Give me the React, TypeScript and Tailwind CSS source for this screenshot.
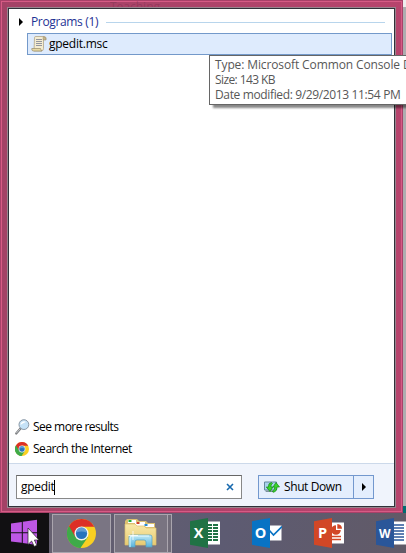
import React from "react";

function ChromeLogo({ size }: { size: number }) {
  return (
    <svg width={size} height={size} viewBox="0 0 28 28" className="block shrink-0">
      <circle cx="14" cy="14" r="14" fill="#f9cf22" />
      <path d="M14 14 L1.9 7 A14 14 0 0 0 13 28 L20.1 17.5 Z" fill="#3faa49" />
      <path d="M1.9 7 L8 17.5 L14 14 L14 7.6 L26.4 7.6 A14 14 0 0 0 1.9 7Z" fill="#dc2f27" />
      <path d="M1.9 7 L8 17.5 L14 21 L12.8 28 A14 14 0 0 1 1.9 7Z" fill="#3faa49" />
      <circle cx="14" cy="14" r="6.8" fill="#f3f4f0" />
      <circle cx="14" cy="14" r="5.4" fill="#2873bd" />
      <path d="M9 13 A5 5 0 0 1 19 13 Q14 11 9 13Z" fill="#609bd3" />
    </svg>
  );
}

function ScrollIcon() {
  return (
    <svg width="16" height="16" viewBox="0 0 16 16" className="block shrink-0">
      <path d="M3.5 1.5 Q3.5 .5 5 .5 H13.5 Q15.5 .8 15 3.5 H12.5 V12.5 Q12.5 15 10 15 H3Z" fill="#f4ecd1" stroke="#a99b7b" strokeWidth=".7" />
      <path d="M12.5 .7 Q11.8 1.3 12.3 4 H15 Q15.6 1 12.5 .7Z" fill="#c9b98c" stroke="#9a8c6b" strokeWidth=".6" />
      <path d="M.8 12.5 H9.5 Q10 14.7 11 15 H2 Q.5 14.6 .8 12.5Z" fill="#e8d9a4" stroke="#9a8c6b" strokeWidth=".7" />
      <path d="M5 3.5h6M5 5.5h6M5 7.5h6M5 9.5h6" stroke="#888b98" strokeWidth=".9" />
    </svg>
  );
}

function Magnifier() {
  return (
    <svg width="15" height="16" viewBox="0 0 15 16" className="block shrink-0">
      <path d="M1.2 14.5 L5.5 9.5" stroke="#77797c" strokeWidth="2.2" strokeLinecap="round" />
      <path d="M1.4 14 L5 10" stroke="#c6c9cc" strokeWidth="1" strokeLinecap="round" />
      <circle cx="8.9" cy="5.6" r="4.9" fill="#c5e2f7" stroke="#8997a5" strokeWidth="1" />
      <path d="M5.5 6 A3.5 3.5 0 0 1 11 3 Q8 4 5.5 6Z" fill="#fff" />
    </svg>
  );
}

function PowerUpdateIcon() {
  return (
    <svg width="16" height="12" viewBox="0 0 16 12" className="block shrink-0">
      <path d="M.5 1 H12.5 V9 H.5Z" fill="#a9d3ee" stroke="#65889d" />
      <path d="M1 9.5H10V11H2Z" fill="#7b919b" />
      <path d="M7.5 1.5 Q4 2 4.5 6 H2.3 L6 10.5 L9 6 H7 Q6.5 3.5 8.5 2.5Z" fill="#39d52a" stroke="#168516" strokeWidth=".7" />
      <path d="M9 11.3 Q13.2 10.5 13 6 H15.5 L12 1.5 L9 6 H10.8 Q11 9 8.5 10Z" fill="#39d52a" stroke="#168516" strokeWidth=".7" />
    </svg>
  );
}

function FolderIcon() {
  return (
    <svg width="33" height="31" viewBox="0 0 33 31" className="block">
      <defs>
        <linearGradient id="folder" x2="0" y2="1"><stop stopColor="#f8e9a9" /><stop offset="1" stopColor="#e7ca72" /></linearGradient>
        <linearGradient id="stand" x2="0" y2="1"><stop stopColor="#bfe9f6" /><stop offset="1" stopColor="#58b3dc" /></linearGradient>
      </defs>
      <path d="M1 3 L3 1 H13 L15 3 H22 L24 5 H31 V26 H1Z" fill="#dcc170" />
      <path d="M4 2H12V5H4Z" fill="#fff" /><path d="M4.5 2h3v2h-3z" fill="#1fae38" />
      <path d="M11 4H21V8H11Z" fill="#fff" /><path d="M12.5 4h3v2h-3z" fill="#d14126" />
      <path d="M1 6 H11 L13 8 H20 L22 10 H32 V27 H1Z" fill="url(#folder)" stroke="#ddbf6a" strokeWidth=".7" />
      <path d="M19 6H30V9H22Z" fill="#fff" /><path d="M20.5 6h3v2h-3z" fill="#258bd2" />
      <path d="M5 19 Q5 17 7 17 H26 Q28 17 28 19 V29 H22 V24 Q22 22 20 22 H13 Q11 22 11 24 V29 H5Z" fill="url(#stand)" stroke="#53a1c3" strokeWidth=".7" />
      <path d="M6 29 V20 Q6 18 8 18 H25" fill="none" stroke="#e3fbff" />
      <path d="M9 13V22M4.5 17.5H14" stroke="#fff" strokeWidth=".8" />
    </svg>
  );
}

function OfficeIcon({ letter, color, children }: { letter: string; color: string; children: React.ReactNode }) {
  return (
    <svg width="30" height="30" viewBox="0 0 30 30" className="block shrink-0">
      {children}
      <path d="M0 3.2 L18 0 V30 L0 26.8Z" fill={color} />
      <text x={letter === "W" ? 8.8 : 8.5} y="20" textAnchor="middle" fill="#fff" fontFamily="'Open Sans', sans-serif" fontWeight="700" fontSize={letter === "W" ? 12 : 14.5}>{letter}</text>
    </svg>
  );
}

function Taskbar() {
  return (
    <div className="flex h-10 w-[406px] overflow-hidden bg-[linear-gradient(100deg,#68616f,#5d5b72_55%,#615a67)]">
      <div className="h-10 w-[49px] shrink-0 bg-[#111012]">
        <svg width="49" height="40" viewBox="0 0 49 40" className="block">
          <path d="M11 10.5 L21.8 9 V19.2 H11Z M22.8 8.8 L37 6.8 V19.2 H22.8Z M11 20.2 H21.8 V29.8 L11 28.5Z M22.8 20.2 H37 V32 L22.8 30Z" fill="#bd57e5" />
          <path d="M28 15 V31.5 L31.6 28.1 L34.3 33.5 L36.8 32.3 L34.4 27 H39Z" fill="#fff" stroke="#222" strokeWidth=".7" />
        </svg>
      </div>
      <div className="mt-px ml-[3px] flex h-[39px] w-[59px] shrink-0 items-center justify-center border border-[#aaa5ae] bg-[#7a7583]">
        <ChromeLogo size={29} />
      </div>
      <div className="mt-px ml-[3px] flex h-[39px] w-[54px] shrink-0 items-center border border-[#aaa5ae] bg-[#797481] pl-[9px]">
        <FolderIcon />
      </div>
      <div className="mt-px h-[39px] w-1 shrink-0 border-y border-r border-[#aaa5ae] bg-[#716c79]" />
      <div className="ml-[18px] flex shrink-0 gap-8 pt-[5px]">
        <OfficeIcon letter="X" color="#207245">
          <path d="M17 3.5H30V26.5H17Z" fill="#fff" />
          <path d="M18 6h4v2h-4zm5 0h5v2h-5zm-5 3h4v2h-4zm5 0h5v2h-5zm-5 3h4v2h-4zm5 0h5v2h-5zm-5 3h4v2h-4zm5 0h5v2h-5zm-5 3h4v2h-4zm5 0h5v2h-5zm-5 3h4v2h-4zm5 0h5v2h-5z" fill="#207245" />
        </OfficeIcon>
        <OfficeIcon letter="O" color="#0873c4">
          <path d="M17 7.5H29.5V22.5H17Z" fill="#fff" />
          <path d="M17 12 L21.5 17 L30 8.5" fill="none" stroke="#0873c4" strokeWidth="1.7" />
        </OfficeIcon>
        <OfficeIcon letter="P" color="#d24726">
          <path d="M17 4.5H30V25.5H17Z" fill="#fff" />
          <path d="M22 7.2 A4.8 4.8 0 1 0 26.8 12 H22Z" fill="#d24726" />
          <path d="M23.3 6V10.7H28A5 5 0 0 0 23.3 6Z" fill="#d24726" />
          <path d="M18 18.5H27M18 21.5H27" stroke="#d24726" strokeWidth="1.5" />
        </OfficeIcon>
        <OfficeIcon letter="W" color="#2a5699">
          <path d="M17 3.5H30V26.5H17Z" fill="#fff" />
          <path d="M18 7H28M18 10H28M18 13H28M18 16H28M18 19H28M18 22H28" stroke="#2a5699" strokeWidth="1.4" />
        </OfficeIcon>
      </div>
    </div>
  );
}

function SearchResults() {
  return (
    <div className="flex h-[454px] flex-col bg-white">
      <div className="mt-[6px] flex h-[14px] items-center pl-[10px]">
        <svg width="4" height="8" viewBox="0 0 4 8"><path d="M0 0L4 4L0 8Z" fill="#000" /></svg>
        <span className="ml-2 w-[68px] text-[12px] tracking-[-0.35px] whitespace-nowrap text-[#1e3294]">Programs (1)</span>
        <span className="ml-[7px] h-px w-[279px] bg-[#b8d5ec]" />
      </div>
      <div className="mt-1 ml-[18px] flex h-[22px] w-[365px] items-center border border-[#7399ca] bg-[#deebfd] pl-[3px]">
        <ScrollIcon />
        <span className="ml-[2px] text-[12px] tracking-[-0.25px]">gpedit.msc</span>
      </div>
      <div className="mt-auto mb-[3px] flex h-[19px] items-center pl-[6px]">
        <Magnifier /><span className="ml-[3px] text-[12px] tracking-[-0.53px]">See more results</span>
      </div>
      <div className="mb-[5px] flex h-[19px] items-center pl-[6px]">
        <ChromeLogo size={14} /><span className="ml-1 text-[12px] tracking-[-0.46px]">Search the Internet</span>
      </div>
    </div>
  );
}

export default function App() {
  return (
    <div className="relative h-[553px] w-[406px] overflow-hidden bg-[#b5b5b8] font-['Open_Sans','Noto_Sans',sans-serif] text-black">
      <div className="flex h-[513px] w-full">
        <div className="h-[513px] w-[403px] shrink-0 border border-[#a94169] bg-[#b3426b] bg-[linear-gradient(90deg,#a34266,#b7446d)] p-px shadow-[inset_0_0_0_1px_#d65b85]">
          <div className="mt-[5px] ml-[5px] h-[501px] w-[389px] border border-[#98858e]">
            <div className="h-[499px] w-[387px] border border-[#303139]">
              <SearchResults />
              <div className="flex h-[43px] border-t border-[#ccd9ea] bg-[#f0f4fc] pt-[11px] pl-[7px]">
                <div className="flex h-6 w-[226px] items-center border border-[#888] border-t-[#666] bg-white pr-[7px] pl-1 text-[12px]">
                  <span className="tracking-[-0.3px]">gpedit</span>
                  <span className="h-[15px] w-px bg-black" />
                  <svg className="ml-auto" width="8" height="8" viewBox="0 0 8 8"><path d="M1 1L7 7M7 1L1 7" stroke="#1769ae" strokeWidth="1.6" /></svg>
                </div>
                <div className="ml-4 flex h-6 w-[116px] border border-[#7398ce] bg-[#e4eefd]">
                  <div className="flex w-[95px] items-center border-r border-[#7398ce] pl-[5px]">
                    <PowerUpdateIcon />
                    <span className="ml-1 text-[12px] tracking-[-0.4px] whitespace-nowrap">Shut Down</span>
                  </div>
                  <div className="flex flex-1 items-center justify-center"><svg width="4" height="8" viewBox="0 0 4 8"><path d="M0 0L4 4L0 8Z" /></svg></div>
                </div>
              </div>
            </div>
          </div>
        </div>
        <div className="flex w-[3px] flex-col bg-[#adadaf]"><div className="h-[7px] bg-[#eee]" /><div className="mt-auto h-[7px] bg-[#006b70]" /></div>
      </div>
      <Taskbar />
      <div className="absolute top-0 left-[110px] h-[7px] overflow-hidden text-[12px] leading-[14px] text-[#752d4c]/40">Teaching</div>
      <div className="absolute top-[55px] left-[209px] h-[50px] w-[210px] border border-[#666] bg-white pt-[1px] pl-[5px] text-[12px] leading-[15px] whitespace-nowrap text-[#575757] shadow-[4px_3px_2px_#0007]">
        <div className="tracking-[-0.12px]">Type: Microsoft Common Console D</div>
        <div className="tracking-[-0.6px]">Size: 143 KB</div>
        <div className="tracking-[-0.36px]">Date modified: 9/29/2013 11:54 PM</div>
      </div>
    </div>
  );
}
